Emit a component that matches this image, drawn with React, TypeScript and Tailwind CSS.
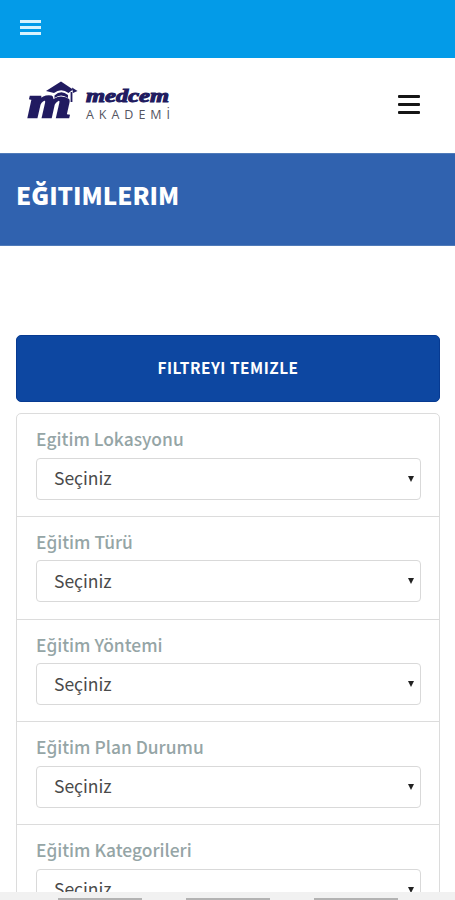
const FILTERS = [
  "Egitim Lokasyonu",
  "Eğitim Türü",
  "Eğitim Yöntemi",
  "Eğitim Plan Durumu",
  "Eğitim Kategorileri",
]

function Logo() {
  return (
    <svg width="150" height="48" viewBox="0 0 150 48" className="block">
      <g fill="#211b60" stroke="#211b60" fontFamily="'Liberation Serif', serif" fontStyle="italic" fontWeight="700">
        <text x="3" y="39" fontSize="45" strokeWidth="2.4" textLength="43" lengthAdjust="spacingAndGlyphs">m</text>
        <text x="61" y="24" fontSize="18" strokeWidth="1" textLength="83" lengthAdjust="spacingAndGlyphs">medcem</text>
      </g>
      {/* graduation cap */}
      <path d="M22 14 L36 4 L51 12 L46 16 L46 21 Q36 15 29 20 L28 16 Z" fill="#fff" stroke="#fff" strokeWidth="1.5" />
      <path d="M21 13 L36 3.5 L48 11.5 L43.5 15 Q36 9.5 29 15 Z" fill="#211b60" />
      <path d="M29.5 17.5 Q36 11.5 43 17 L43 20 Q36 15 29.5 20 Z" fill="#211b60" />
      <path d="M47 9.5 L52.5 13 L48 15 Z" fill="#211b60" />
      <path d="M46.5 14 V24" stroke="#211b60" strokeWidth="1.8" />
      <text x="61" y="40.5" fontSize="12.5" fill="#55555f" fontFamily="'Open Sans', sans-serif" textLength="84">AKADEMİ</text>
    </svg>
  )
}

function FilterSelect({ label }: { label: string }) {
  return (
    <div className="h-[102.75px] shrink-0 border-b border-[#dcdcdc] pt-3 pr-[18px] pl-[19px]">
      <div className="h-[31.6px] text-[17.4px] leading-[25px] font-medium text-[#95a5a6]">{label}</div>
      <button className="flex h-[42px] w-full items-center justify-between rounded-[4px] border border-[#d9d9d9] bg-white pr-[5px] pl-[17px]">
        <span className="-mt-px text-[17.5px] leading-[26px] text-[#4a4a4a]">Seçiniz</span>
        <svg width="8" height="6" viewBox="0 0 8 6"><path d="M1 0h6L4 6z" fill="#222" /></svg>
      </button>
    </div>
  )
}

export default function App() {
  return (
    <div className="flex h-[900px] w-[455px] flex-col overflow-hidden bg-white font-['Noto_Sans_CJK_SC','Noto_Sans',sans-serif]">
      <header className="flex h-[58px] shrink-0 items-start bg-[#039be8] pt-5 pl-5">
        <button className="flex w-[21px] flex-col gap-[3px]">
          <span className="h-[3px] bg-[#d9f3fd]" />
          <span className="h-[3px] bg-[#d9f3fd]" />
          <span className="h-[3px] bg-[#d9f3fd]" />
        </button>
      </header>

      <nav className="flex h-[95px] shrink-0 items-start justify-between pt-5 pr-[35px] pl-[25px]">
        <Logo />
        <button className="mt-[17px] flex w-[22px] flex-col gap-[5px]">
          <span className="h-[3px] rounded-[1px] bg-[#151515]" />
          <span className="h-[3px] rounded-[1px] bg-[#151515]" />
          <span className="h-[3px] rounded-[1px] bg-[#151515]" />
        </button>
      </nav>

      <div className="h-[93px] shrink-0 border-y border-[#507bb9] bg-[#3062af] pt-[23px] pl-4">
        <h1 className="text-[24.2px] leading-[36px] font-black text-white">EĞITIMLERIM</h1>
      </div>

      <main className="flex min-h-0 flex-1 flex-col overflow-hidden pt-[89px] pr-[15px] pl-4">
        <button className="h-[67px] shrink-0 rounded-[5px] border border-[#073a91] bg-[#0d47a1] pb-[2px] text-[15.4px] font-bold tracking-[0.5px] text-white">
          FILTREYI TEMIZLE
        </button>
        <section className="mt-[11px] flex shrink-0 flex-col rounded-t-[5px] border border-[#dcdcdc]">
          {FILTERS.map(f => <FilterSelect key={f} label={f} />)}
        </section>
      </main>

      <footer className="flex h-[8px] shrink-0 items-end gap-[44px] bg-[#f1f1f1] pl-[58px]">
        <span className="h-[2px] w-[84px] bg-[#b3b3b3]" />
        <span className="h-[2px] w-[84px] bg-[#b3b3b3]" />
        <span className="h-[2px] w-[84px] bg-[#b3b3b3]" />
      </footer>
    </div>
  )
}
